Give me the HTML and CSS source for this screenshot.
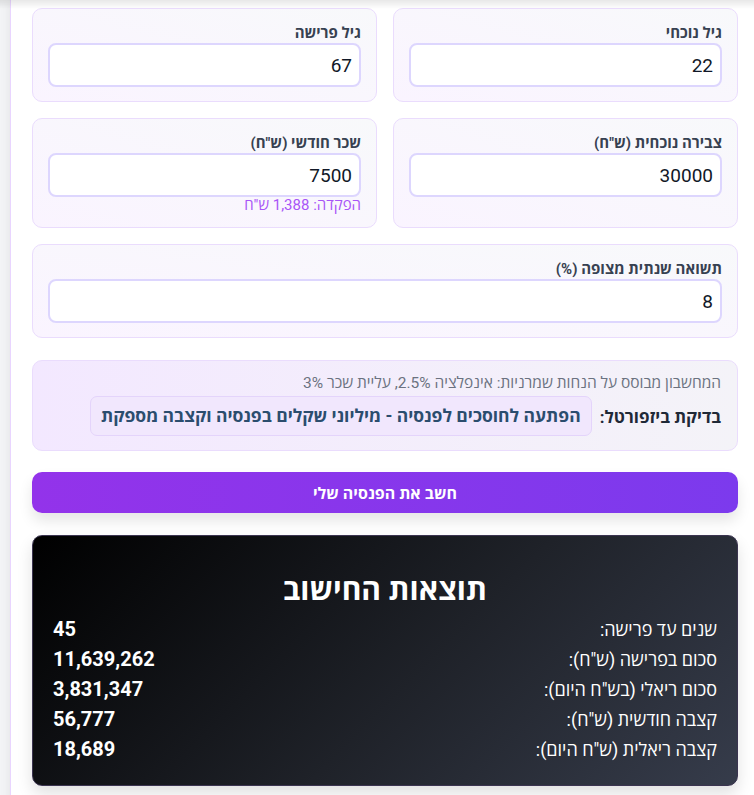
FILE: index.html
```html
<!DOCTYPE html>
<html lang="he" dir="rtl">
<head>
    <meta charset="UTF-8">
    <meta name="viewport" content="width=device-width, initial-scale=1.0">
    <title>מחשבון פנסיה</title>
    <link rel="stylesheet" href="styles.css">
</head>
<body>
    <div class="page">
        <div class="fields">
            <div class="field">
                <label class="field-label">גיל נוכחי</label>
                <input class="field-input" type="text" value="22">
            </div>
            <div class="field">
                <label class="field-label">גיל פרישה</label>
                <input class="field-input" type="text" value="67">
            </div>
            <div class="field">
                <label class="field-label">צבירה נוכחית (ש"ח)</label>
                <input class="field-input" type="text" value="30000">
            </div>
            <div class="field">
                <label class="field-label">שכר חודשי (ש"ח)</label>
                <input class="field-input" type="text" value="7500">
                <div class="field-hint">הפקדה: 1,388 ש"ח</div>
            </div>
            <div class="field field-wide">
                <label class="field-label">תשואה שנתית מצופה (%)</label>
                <input class="field-input" type="text" value="8">
            </div>
        </div>

        <div class="info">
            <p class="info-note">המחשבון מבוסס על הנחות שמרניות: אינפלציה 2.5%, עליית שכר 3%</p>
            <div class="info-row">
                <span class="info-title">בדיקת ביזפורטל:</span>
                <a class="info-link" href="#">הפתעה לחוסכים לפנסיה - מיליוני שקלים בפנסיה וקצבה מספקת</a>
            </div>
        </div>

        <button class="calc-btn" type="button">חשב את הפנסיה שלי</button>

        <div class="results">
            <h2 class="results-title">תוצאות החישוב</h2>
            <div class="result-row"><span>שנים עד פרישה:</span><b>45</b></div>
            <div class="result-row"><span>סכום בפרישה (ש"ח):</span><b>11,639,262</b></div>
            <div class="result-row"><span>סכום ריאלי (בש"ח היום):</span><b>3,831,347</b></div>
            <div class="result-row"><span>קצבה חודשית (ש"ח):</span><b>56,777</b></div>
            <div class="result-row"><span>קצבה ריאלית (ש"ח היום):</span><b>18,689</b></div>
        </div>
    </div>
</body>
</html>
```

FILE: styles.css
```css
*{
    box-sizing: border-box;
}
html,
body {
    margin: 0;
    padding: 0;
    height: 100%;
    overflow: hidden;
    font-family: Roboto, "Open Sans", "Liberation Sans", sans-serif;
    background-color: #f3f4f6;
    color: #1f2937;
}
body::before {
    content: "";
    position: fixed;
    top: 0;
    left: 0;
    right: 0;
    height: 9px;
    background: linear-gradient(to bottom, rgba(0,0,0,0.09), rgba(0,0,0,0));
    z-index: 5;
}
.page {
    margin-left: 10px;
    min-height: 100%;
    background: #ffffff;
    border-left: 1px solid #e9d5ff;
    box-shadow: 0 0 10px rgba(0,0,0,0.08);
    padding: 8px 16px 40px 21px;
}

/* input cards */
.fields {
    display: grid;
    grid-template-columns: 1fr 1fr;
    gap: 16px;
}
.field {
    display: flex;
    flex-direction: column;
    padding: 14px 15px;
    border: 1px solid #eadcfd;
    border-radius: 10px;
    background: linear-gradient(to top right, #faf4ff, #f8f9fb);
}
.field-wide {
    grid-column: 1 / -1;
}
.field-label {
    font-size: 15px;
    line-height: 20px;
    font-weight: 700;
    color: #374151;
}
.field-input {
    height: 44px;
    width: 100%;
    border: 2px solid #ddd6fe;
    border-radius: 8px;
    background: #fff;
    padding: 0 7px;
    font-family: inherit;
    font-size: 19px;
    color: #111827;
    text-align: right;
    outline: none;
}
.field-hint {
    margin-top: 1px;
    font-size: 15px;
    line-height: 15px;
    color: #a855f7;
}

/* info box */
.info {
    margin-top: 22px;
    padding: 12px 16px 14px;
    border: 1px solid #eadcfd;
    border-radius: 10px;
    background: linear-gradient(to right, #f3e8ff, #f4f3f8);
}
.info-note {
    margin: 0;
    font-size: 15.5px;
    line-height: 20px;
    color: #6b7280;
}
.info-row {
    margin-top: 3px;
    display: flex;
    align-items: center;
    gap: 8px;
}
.info-title {
    font-size: 17px;
    font-weight: 700;
    color: #1f2937;
}
.info-link {
    padding: 9px 10px;
    border: 1px solid #e4d4fb;
    border-radius: 7px;
    background: #f1e7fd;
    font-size: 17.5px;
    line-height: 20px;
    font-weight: 700;
    color: #2b4d6e;
    text-decoration: none;
}

/* button */
.calc-btn {
    display: block;
    width: 100%;
    margin-top: 21px;
    height: 41px;
    border: 0;
    border-radius: 10px;
    background: linear-gradient(to right, #9333ea, #7c3aed);
    color: #fff;
    font-family: inherit;
    font-size: 16px;
    font-weight: 700;
    box-shadow: 0 8px 14px rgba(0,0,0,0.1);
}

/* results */
.results {
    margin-top: 22px;
    padding: 35px 20px 21px;
    border-radius: 10px;
    border: 1px solid #3b3450;
    background: linear-gradient(135deg, #000000 0%, #1f2229 55%, #363c4b 100%);
    color: #fff;
    box-shadow: 0 8px 16px rgba(0,0,0,0.12);
}
.results-title {
    margin: 0 0 5px;
    text-align: center;
    font-size: 30px;
    line-height: 38px;
    font-weight: 700;
}
.result-row {
    display: flex;
    justify-content: space-between;
    align-items: center;
    height: 30px;
    font-size: 18px;
}
.result-row b {
    font-size: 20px;
    font-weight: 700;
}
```
